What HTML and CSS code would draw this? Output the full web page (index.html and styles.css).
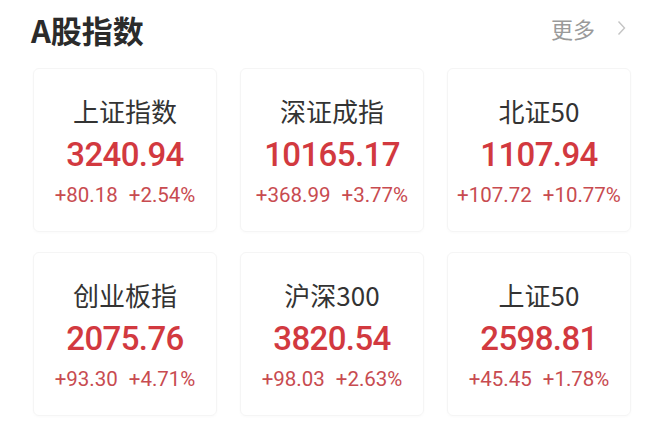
FILE: index.html
```html
<!DOCTYPE html>
<html lang="zh-CN">
<head>
<meta charset="utf-8">
<link rel="stylesheet" href="styles.css">
</head>
<body>
<div class="page">
  <div class="header">
    <div class="title">A股指数</div>
    <div class="more">更多<svg class="chev" width="9" height="16" viewBox="0 0 9 16"><path d="M1.5 1.5 L7.5 8 L1.5 14.5" fill="none" stroke="#c4c4c4" stroke-width="1.4"/></svg></div>
  </div>
  <div class="grid">
    <div class="card"><div class="name">上证指数</div><div class="value">3240.94</div><div class="change"><span>+80.18</span><span>+2.54%</span></div></div>
    <div class="card"><div class="name">深证成指</div><div class="value">10165.17</div><div class="change"><span>+368.99</span><span>+3.77%</span></div></div>
    <div class="card"><div class="name">北证50</div><div class="value">1107.94</div><div class="change"><span>+107.72</span><span>+10.77%</span></div></div>
    <div class="card"><div class="name">创业板指</div><div class="value">2075.76</div><div class="change"><span>+93.30</span><span>+4.71%</span></div></div>
    <div class="card"><div class="name">沪深300</div><div class="value">3820.54</div><div class="change"><span>+98.03</span><span>+2.63%</span></div></div>
    <div class="card"><div class="name">上证50</div><div class="value">2598.81</div><div class="change"><span>+45.45</span><span>+1.78%</span></div></div>
  </div>
</div>
</body>
</html>
```
FILE: styles.css
```css
html, body {
  margin: 0;
  padding: 0;
  background: #ffffff;
}
.page {
  width: 664px;
  height: 445px;
  overflow: hidden;
  font-family: "Noto Sans CJK SC", "Noto Sans", sans-serif;
}
.header {
  display: flex;
  justify-content: space-between;
  align-items: center;
  padding: 11px 38px 0 31px;
  height: 37px;
}
.title {
  font-size: 31px;
  line-height: 37px;
  font-weight: 700;
  color: #2b2b2b;
}
.more {
  display: flex;
  align-items: center;
  gap: 22px;
  font-size: 22px;
  line-height: 28px;
  color: #9a9a9a;
  margin-top: -4px;
}
.chev {
  display: block;
}
.grid {
  display: grid;
  grid-template-columns: repeat(3, 184px);
  grid-auto-rows: 164px;
  column-gap: 23px;
  row-gap: 20px;
  padding: 20px 0 0 33px;
}
.card {
  box-sizing: border-box;
  border: 1px solid #f5f5f5;
  border-radius: 6px;
  box-shadow: 0 1px 3px rgba(0, 0, 0, 0.025);
  display: flex;
  flex-direction: column;
  align-items: center;
  padding-top: 27px;
}
.name {
  font-size: 26px;
  line-height: 30px;
  color: #333333;
}
.value {
  margin-top: 10px;
  font-family: Roboto, "Liberation Sans", sans-serif;
  font-size: 33px;
  line-height: 38px;
  font-weight: 500;
  letter-spacing: -0.6px;
  color: #d2393f;
}
.change {
  margin-top: 9px;
  display: flex;
  gap: 11px;
  font-family: Roboto, "Liberation Sans", sans-serif;
  font-size: 20.5px;
  line-height: 24px;
  color: #c84b50;
}
```
